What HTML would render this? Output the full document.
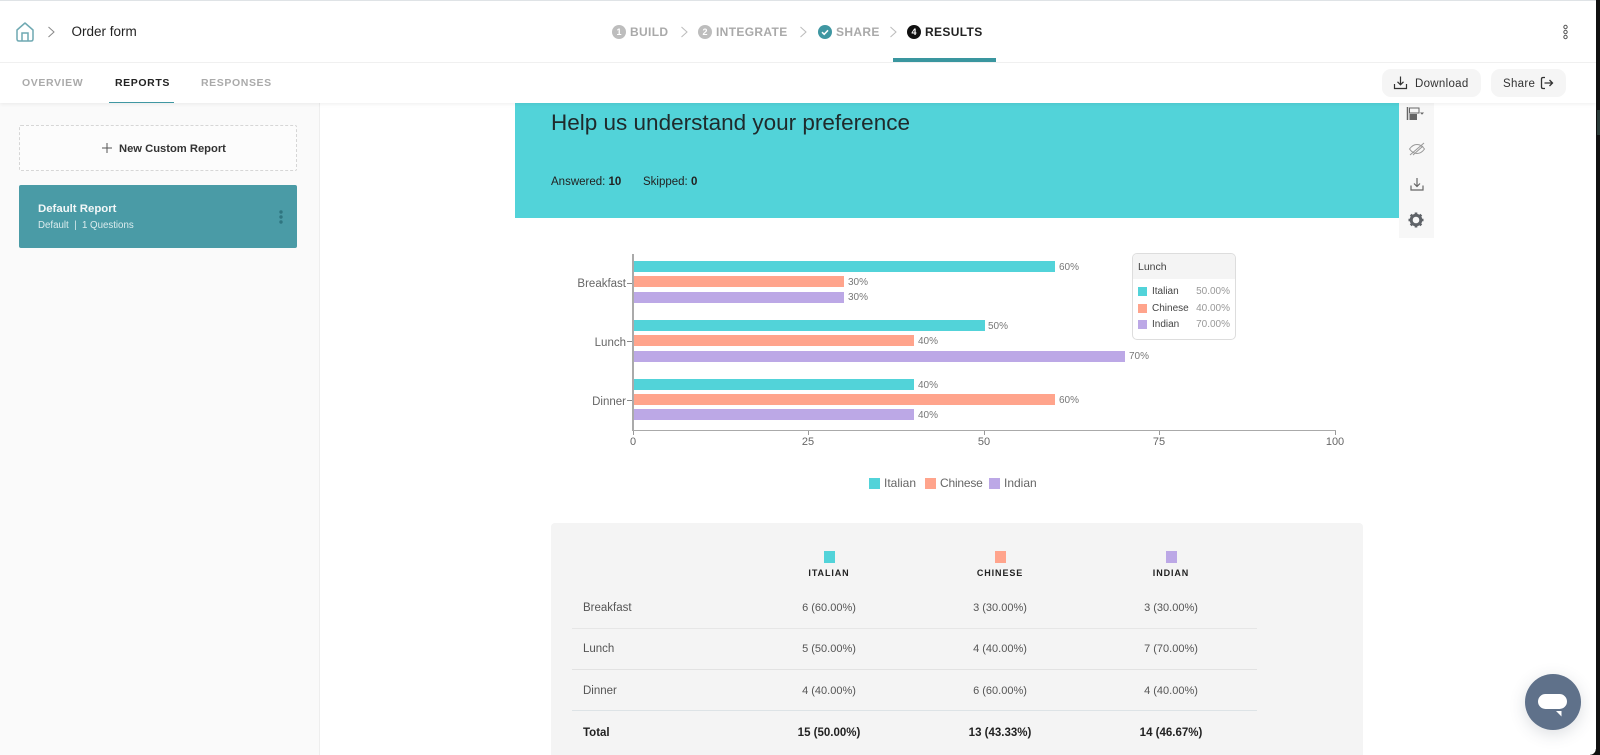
<!DOCTYPE html>
<html><head><meta charset="utf-8">
<style>
html,body{margin:0;padding:0;width:1600px;height:755px;overflow:hidden;background:#fff;font-family:"Liberation Sans",sans-serif;color:#222}
.a{position:absolute}
.t{position:absolute;white-space:nowrap;line-height:16px}
.c{transform:translateX(-50%)}
.r{transform:translateX(-100%)}
.bar{position:absolute;height:11px}
.te{background:#52d3d9}.or{background:#ffa48c}.pu{background:#bca8e6}
.pl{font-size:10px;color:#777}
.ax{font-size:11.500px;color:#666}
.cell{font-size:11px;color:#555}
.lab{font-size:11.500px;color:#555}
.b{font-weight:bold;color:#222;font-size:11.500px}
.step{font-size:12px;font-weight:bold;letter-spacing:.35px;color:#a9a9a9}
.num{position:absolute;width:14px;height:14px;border-radius:50%;background:#bdbdbd;color:#fff;font-size:9px;font-weight:bold;line-height:14px;text-align:center;top:25px}
.tab{font-size:10.500px;font-weight:bold;letter-spacing:.6px;color:#aaa}
</style></head>
<body>
<!-- sidebar -->
<div class="a" style="left:0;top:103px;width:319px;height:652px;background:#fafafa;border-right:1px solid #eee"></div>
<div class="a" style="left:19px;top:125px;width:276px;height:44px;background:#fcfcfc;border:1px dashed #d6d6d6;border-radius:2px"></div>
<svg class="a" style="left:101px;top:142px" width="12" height="12"><path d="M6 1V11M1 6H11" stroke="#555" stroke-width="1"/></svg>
<div class="t" style="left:119px;top:141px;font-size:11.200px;font-weight:bold;color:#333">New Custom Report</div>
<div class="a" style="left:19px;top:185px;width:278px;height:63px;background:#4a9ba6;border-radius:2px"></div>
<div class="t" style="left:38px;top:201px;font-size:11.400px;font-weight:bold;color:#f2f7f8">Default Report</div>
<div class="t" style="left:38px;top:218px;font-size:9.700px;color:#dcecee">Default&nbsp; |&nbsp; 1 Questions</div>
<svg class="a" style="left:278px;top:209px" width="6" height="16"><circle cx="3" cy="3" r="1.700" fill="#2f7580"/><circle cx="3" cy="8" r="1.700" fill="#2f7580"/><circle cx="3" cy="13" r="1.700" fill="#2f7580"/></svg>

<!-- teal panel -->
<div class="a" style="left:515px;top:103px;width:884px;height:115px;background:#52d3d9"></div>
<div class="t" style="left:551px;top:110px;line-height:26px;font-size:22.500px;color:#1f2a2c">Help us understand your preference</div>
<div class="t" style="left:551px;top:174px;font-size:11.500px;color:#222">Answered: <b>10</b></div>
<div class="t" style="left:643px;top:174px;font-size:11.500px;color:#222">Skipped: <b>0</b></div>

<!-- right toolbar -->
<div class="a" style="left:1399px;top:103px;width:35px;height:135px;background:#f7f7f7"></div>
<svg class="a" style="left:1405px;top:103px" width="24" height="20"><path d="M2.500 4V17" stroke="#666" stroke-width="1.500" fill="none"/><path d="M4.500 5H14V10H4.500Z" stroke="#666" stroke-width="1" fill="none"/><path d="M4.500 11H12V17H4.500Z" fill="#666"/><path d="M15 9.500h4l-2 2.300z" fill="#666"/></svg>
<svg class="a" style="left:1408px;top:140px" width="18" height="18"><path d="M1.500 9C4 5.500 6.500 4.500 9 4.500S14 5.500 16.500 9C14 12.500 11.500 13.500 9 13.500S4 12.500 1.500 9Z" stroke="#999" fill="none"/><path d="M2 15L16 3M5 15L15 6" stroke="#999" fill="none"/></svg>
<svg class="a" style="left:1409px;top:176px" width="16" height="16"><path d="M8 2V10M5 7.500L8 10.500L11 7.500M2 9.500V14H14V9.500" stroke="#666" stroke-width="1.200" fill="none"/></svg>
<svg class="a" style="left:1408px;top:212px" width="16" height="16" viewBox="0 0 16 16"><circle cx="8" cy="8" r="4.800" fill="none" stroke="#5f6368" stroke-width="3"/><g stroke="#5f6368" stroke-width="2.600"><path d="M8 0.500V3M8 13V15.500M.5 8H3M13 8H15.500M2.700 2.700L4.500 4.500M11.500 11.500L13.300 13.300M13.300 2.700L11.500 4.500M4.500 11.500L2.700 13.300"/></g></svg>

<!-- chart -->
<div class="a" style="left:632px;top:254px;width:2px;height:177px;background:#aaa"></div>
<div class="a" style="left:632px;top:430px;width:704px;height:1px;background:#aaa"></div>
<div class="a" style="left:627px;top:283px;width:5px;height:1px;background:#888"></div>
<div class="a" style="left:627px;top:341px;width:5px;height:1px;background:#888"></div>
<div class="a" style="left:627px;top:400px;width:5px;height:1px;background:#888"></div>
<div class="t ax r" style="left:626px;top:276px">Breakfast</div>
<div class="t ax r" style="left:626px;top:335px">Lunch</div>
<div class="t ax r" style="left:626px;top:394px">Dinner</div>

<div class="bar te" style="left:634px;top:261px;width:421px"></div>
<div class="bar or" style="left:634px;top:276px;width:210px"></div>
<div class="bar pu" style="left:634px;top:292px;width:210px"></div>
<div class="bar te" style="left:634px;top:320px;width:351px"></div>
<div class="bar or" style="left:634px;top:335px;width:280px"></div>
<div class="bar pu" style="left:634px;top:351px;width:491px"></div>
<div class="bar te" style="left:634px;top:379px;width:280px"></div>
<div class="bar or" style="left:634px;top:394px;width:421px"></div>
<div class="bar pu" style="left:634px;top:409px;width:280px"></div>
<div class="t pl" style="left:1059px;top:260px">60%</div>
<div class="t pl" style="left:848px;top:275px">30%</div>
<div class="t pl" style="left:848px;top:290px">30%</div>
<div class="t pl" style="left:988px;top:319px">50%</div>
<div class="t pl" style="left:918px;top:334px">40%</div>
<div class="t pl" style="left:1129px;top:349px">70%</div>
<div class="t pl" style="left:918px;top:378px">40%</div>
<div class="t pl" style="left:1059px;top:393px">60%</div>
<div class="t pl" style="left:918px;top:408px">40%</div>

<div class="a" style="left:633px;top:431px;width:1px;height:4px;background:#999"></div>
<div class="a" style="left:808px;top:431px;width:1px;height:4px;background:#999"></div>
<div class="a" style="left:984px;top:431px;width:1px;height:4px;background:#999"></div>
<div class="a" style="left:1159px;top:431px;width:1px;height:4px;background:#999"></div>
<div class="a" style="left:1335px;top:431px;width:1px;height:4px;background:#999"></div>
<div class="t c" style="left:633px;top:434px;font-size:11px;color:#666">0</div>
<div class="t c" style="left:808px;top:434px;font-size:11px;color:#666">25</div>
<div class="t c" style="left:984px;top:434px;font-size:11px;color:#666">50</div>
<div class="t c" style="left:1159px;top:434px;font-size:11px;color:#666">75</div>
<div class="t c" style="left:1335px;top:434px;font-size:11px;color:#666">100</div>

<div class="a te" style="left:869px;top:478px;width:11px;height:11px"></div>
<div class="t" style="left:884px;top:475px;font-size:12px;color:#666">Italian</div>
<div class="a or" style="left:925px;top:478px;width:11px;height:11px"></div>
<div class="t" style="left:940px;top:475px;font-size:12px;letter-spacing:-.2px;color:#666">Chinese</div>
<div class="a pu" style="left:989px;top:478px;width:11px;height:11px"></div>
<div class="t" style="left:1004px;top:475px;font-size:12px;color:#666">Indian</div>

<!-- tooltip -->
<div class="a" style="left:1132px;top:253px;width:102px;height:85px;background:#fff;border:1px solid #ddd;border-radius:5px;overflow:hidden"><div style="height:25px;background:#f4f4f4"></div></div>
<div class="t" style="left:1138px;top:259px;font-size:10.500px;color:#444">Lunch</div>
<div class="a te" style="left:1138px;top:287px;width:9px;height:9px"></div>
<div class="a or" style="left:1138px;top:304px;width:9px;height:9px"></div>
<div class="a pu" style="left:1138px;top:320px;width:9px;height:9px"></div>
<div class="t" style="left:1152px;top:284px;font-size:10px;color:#444">Italian</div>
<div class="t" style="left:1152px;top:301px;font-size:10px;color:#444">Chinese</div>
<div class="t" style="left:1152px;top:317px;font-size:10px;color:#444">Indian</div>
<div class="t r" style="left:1230px;top:284px;font-size:10px;color:#999">50.00%</div>
<div class="t r" style="left:1230px;top:301px;font-size:10px;color:#999">40.00%</div>
<div class="t r" style="left:1230px;top:317px;font-size:10px;color:#999">70.00%</div>

<!-- table -->
<div class="a" style="left:551px;top:523px;width:812px;height:232px;background:#f4f4f4;border-radius:4px 4px 0 0"></div>
<div class="a te" style="left:824px;top:551px;width:11px;height:12px"></div>
<div class="a or" style="left:995px;top:551px;width:11px;height:12px"></div>
<div class="a pu" style="left:1166px;top:551px;width:11px;height:12px"></div>
<div class="t c" style="left:829px;top:565px;font-size:9px;font-weight:bold;letter-spacing:.9px;color:#222">ITALIAN</div>
<div class="t c" style="left:1000px;top:565px;font-size:9px;font-weight:bold;letter-spacing:.9px;color:#222">CHINESE</div>
<div class="t c" style="left:1171px;top:565px;font-size:9px;font-weight:bold;letter-spacing:.9px;color:#222">INDIAN</div>
<div class="a" style="left:572px;top:628px;width:685px;height:1px;background:#e6e6e6"></div>
<div class="a" style="left:572px;top:669px;width:685px;height:1px;background:#e2e2e2"></div>
<div class="a" style="left:572px;top:710px;width:685px;height:1px;background:#dde3e6"></div>

<div class="t lab" style="left:583px;top:600px">Breakfast</div>
<div class="t cell c" style="left:829px;top:600px">6 (60.00%)</div>
<div class="t cell c" style="left:1000px;top:600px">3 (30.00%)</div>
<div class="t cell c" style="left:1171px;top:600px">3 (30.00%)</div>
<div class="t lab" style="left:583px;top:641px">Lunch</div>
<div class="t cell c" style="left:829px;top:641px">5 (50.00%)</div>
<div class="t cell c" style="left:1000px;top:641px">4 (40.00%)</div>
<div class="t cell c" style="left:1171px;top:641px">7 (70.00%)</div>
<div class="t lab" style="left:583px;top:683px">Dinner</div>
<div class="t cell c" style="left:829px;top:683px">4 (40.00%)</div>
<div class="t cell c" style="left:1000px;top:683px">6 (60.00%)</div>
<div class="t cell c" style="left:1171px;top:683px">4 (40.00%)</div>
<div class="t b" style="left:583px;top:725px">Total</div>
<div class="t b c" style="left:829px;top:725px">15 (50.00%)</div>
<div class="t b c" style="left:1000px;top:725px">13 (43.33%)</div>
<div class="t b c" style="left:1171px;top:725px">14 (46.67%)</div>

<!-- header -->
<div class="a" style="left:0;top:0;width:1596px;height:103px;background:#fff;box-shadow:0 1px 4px rgba(0,0,0,.07)"></div>
<div class="a" style="left:0;top:0;width:1596px;height:1px;background:#dfe3e6"></div>
<div class="a" style="left:0;top:62px;width:1596px;height:1px;background:#f0f0f0"></div>
<svg class="a" style="left:15px;top:21px" width="20" height="21" viewBox="0 0 20 21"><path d="M2 9L10 2L18 9V18Q18 20 16 20H4Q2 20 2 18Z" fill="none" stroke="#6fa9b2" stroke-width="1.500" stroke-linejoin="round"/><path d="M7 20V12H13V20" fill="none" stroke="#6fa9b2" stroke-width="1.500"/></svg>
<svg class="a" style="left:47px;top:26px" width="9" height="12"><path d="M1.500 1L7 6L1.500 11" stroke="#888" fill="none"/></svg>
<div class="t" style="left:71.500px;top:24px;font-size:13.500px;color:#222">Order form</div>

<div class="num" style="left:612px">1</div>
<div class="t step" style="left:630px;top:24px">BUILD</div>
<svg class="a" style="left:680px;top:26px" width="9" height="12"><path d="M1.500 1L7 6L1.500 11" stroke="#bbb" fill="none"/></svg>
<div class="num" style="left:698px">2</div>
<div class="t step" style="left:716px;top:24px">INTEGRATE</div>
<svg class="a" style="left:799px;top:26px" width="9" height="12"><path d="M1.500 1L7 6L1.500 11" stroke="#bbb" fill="none"/></svg>
<svg class="a" style="left:818px;top:25px" width="14" height="14"><circle cx="7" cy="7" r="7" fill="#3f97a2"/><path d="M4 7.200L6.200 9.300L10 5.300" stroke="#fff" stroke-width="1.500" fill="none"/></svg>
<div class="t step" style="left:836px;top:24px">SHARE</div>
<svg class="a" style="left:889px;top:26px" width="9" height="12"><path d="M1.500 1L7 6L1.500 11" stroke="#bbb" fill="none"/></svg>
<div class="num" style="left:907px;background:#111">4</div>
<div class="t step" style="left:925px;top:24px;color:#222">RESULTS</div>
<div class="a" style="left:893px;top:58px;width:103px;height:4px;background:#3a969f"></div>

<svg class="a" style="left:1562px;top:24px" width="7" height="16"><circle cx="3.500" cy="3" r="1.700" fill="none" stroke="#555"/><circle cx="3.500" cy="8" r="1.700" fill="none" stroke="#555"/><circle cx="3.500" cy="13" r="1.700" fill="none" stroke="#555"/></svg>

<div class="t tab" style="left:22px;top:75px">OVERVIEW</div>
<div class="t tab" style="left:115px;top:75px;color:#222">REPORTS</div>
<div class="t tab" style="left:201px;top:75px">RESPONSES</div>
<div class="a" style="left:109px;top:102px;width:65px;height:1px;background:#3f97a2"></div>

<div class="a" style="left:1382px;top:69px;width:99px;height:28px;background:#f5f5f5;border-radius:9px"></div>
<svg class="a" style="left:1393px;top:75px" width="15" height="15"><path d="M7.500 1.500V9.500M4.500 6.800L7.500 9.800L10.500 6.800M1.500 9V13.500H13.500V9" stroke="#333" stroke-width="1.200" fill="none"/></svg>
<div class="t" style="left:1415px;top:75.500px;font-size:11.500px;letter-spacing:.3px;color:#333">Download</div>
<div class="a" style="left:1491px;top:69px;width:75px;height:28px;background:#f5f5f5;border-radius:9px"></div>
<div class="t" style="left:1503px;top:75.500px;font-size:11.500px;letter-spacing:.3px;color:#333">Share</div>
<svg class="a" style="left:1540px;top:76px" width="14" height="14"><path d="M5 1.500H3Q1.500 1.500 1.500 3V11Q1.500 12.500 3 12.500H5M4.500 7H12.500M9.500 4L12.500 7L9.500 10" stroke="#333" stroke-width="1.300" fill="none"/></svg>

<!-- chat -->
<div class="a" style="left:1525px;top:674px;width:56px;height:56px;border-radius:50%;background:#5f718a;box-shadow:0 4px 16px rgba(60,70,90,.18)"></div>
<div class="a" style="left:1538px;top:694px;width:29px;height:15px;border-radius:8px;background:#fff"></div>
<svg class="a" style="left:1556px;top:711px" width="6" height="6"><path d="M0 0H5.500V5.500Z" fill="#fff"/></svg>

<!-- right edge -->
<div class="a" style="left:1596px;top:0;width:4px;height:755px;background:#111"></div>
<div class="a" style="left:1597px;top:110px;width:3px;height:25px;background:#2a3a38"></div>
<div class="a" style="left:1590px;top:749px;width:6px;height:6px;background:radial-gradient(circle at 0 0,transparent 5.500px,#111 6px)"></div>
</body></html>
